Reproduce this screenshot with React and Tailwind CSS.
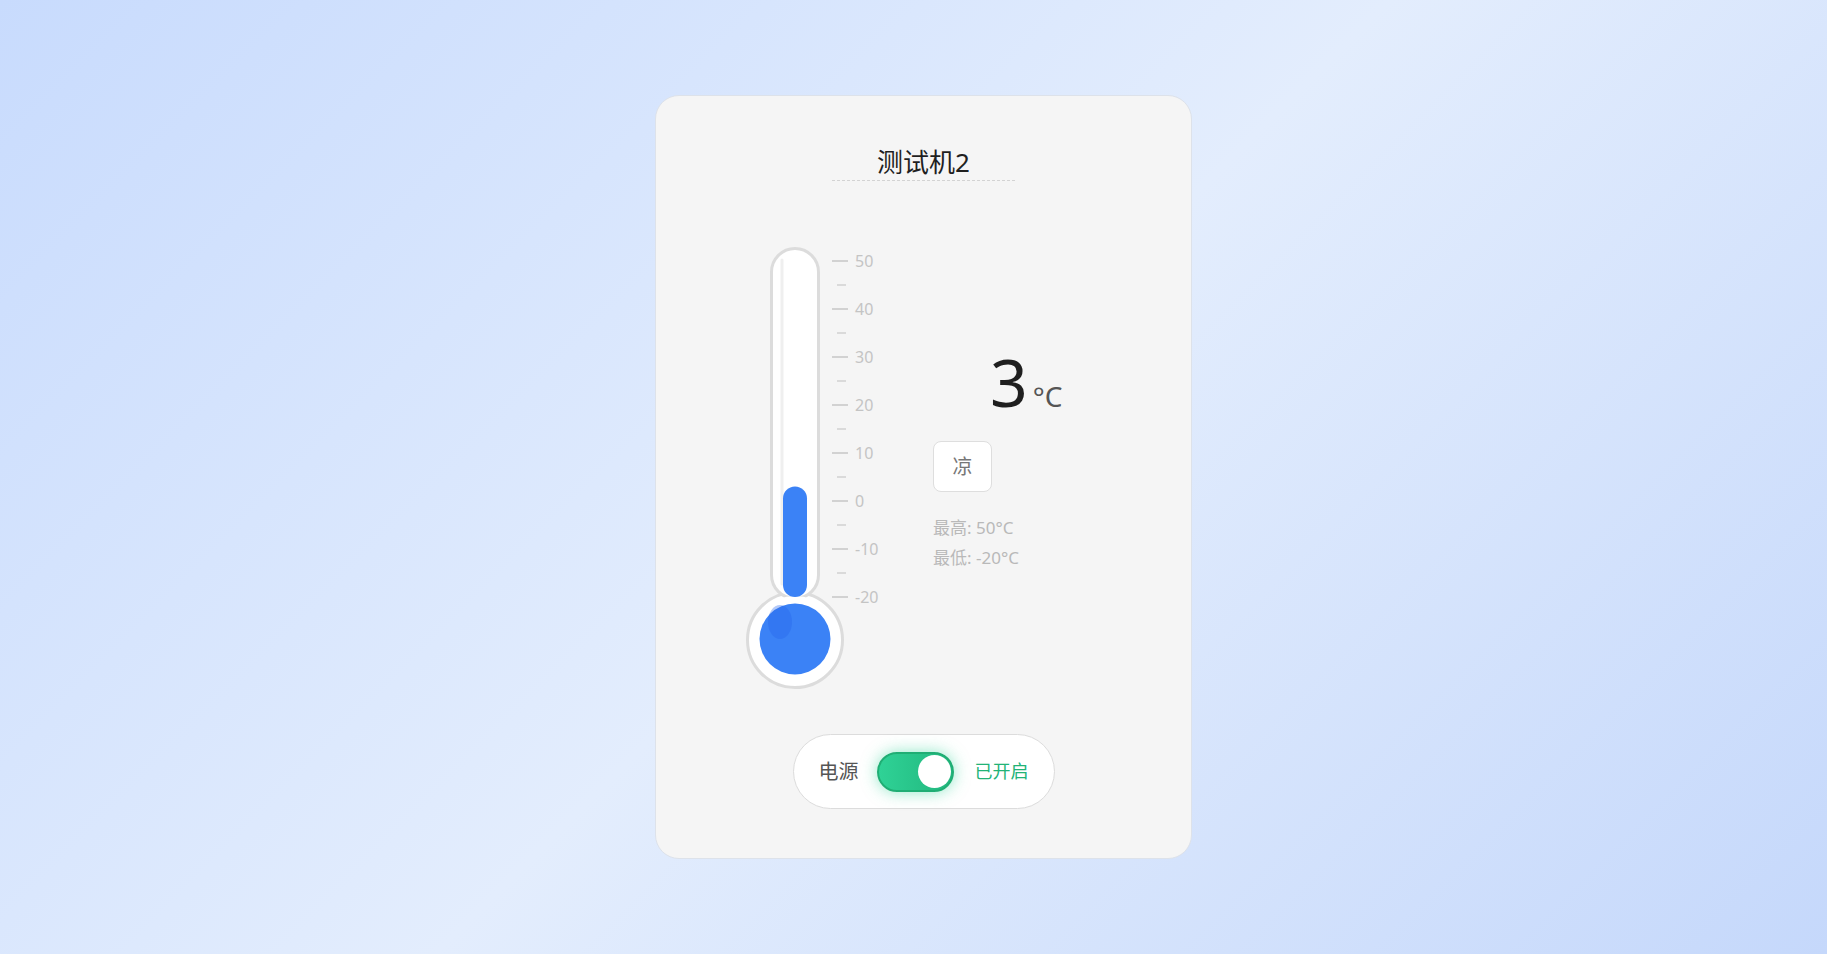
import React from "react";

const ticks = [50, 40, 30, 20, 10, 0, -10, -20];

function Thermometer({ value }) {
  // scale: 50 at y=17, -20 at y=353 (48px per 10 degrees)
  const yFor = (t) => 17 + ((50 - t) / 10) * 48;
  const top = yFor(value);
  return (
    <svg width="145" height="450" viewBox="0 0 145 450">
      <circle cx="51" cy="396" r="47.5" fill="#ffffff" stroke="#dcdcdc" strokeWidth="3" />
      <rect x="27.5" y="4.5" width="47" height="350" rx="23.5" fill="#ffffff" stroke="#dcdcdc" strokeWidth="3" />
      <line x1="38" y1="16" x2="38" y2="340" stroke="#efefef" strokeWidth="3" strokeLinecap="round" />
      <circle cx="51" cy="396" r="44" fill="#ffffff" />
      <rect x="39" y={top} width="24" height={353 - top} rx="12" fill="#3b82f6" />
      <circle cx="51" cy="395" r="35.5" fill="#3b82f6" />
      <ellipse cx="36" cy="378" rx="12" ry="17" fill="#2563eb" opacity="0.35" />
      {ticks.map((t, i) => (
        <g key={t}>
          <line x1="88" y1={17 + i * 48} x2="104" y2={17 + i * 48} stroke="#d2d2d2" strokeWidth="2" />
          <text x="111" y={17 + i * 48} dominantBaseline="central" fontSize="16" fill="#c4c4c4" fontFamily="Noto Sans, sans-serif">
            {t}
          </text>
          {i < ticks.length - 1 && (
            <line x1="93" y1={41 + i * 48} x2="102" y2={41 + i * 48} stroke="#dadada" strokeWidth="2" />
          )}
        </g>
      ))}
    </svg>
  );
}

export default function App() {
  const temp = 3;
  return (
    <div className="min-h-screen w-full flex items-center justify-center pl-[20px] bg-[linear-gradient(135deg,#c8dbfd_0%,#e3edfd_50%,#c5d8fb_100%)] font-['Noto_Sans','Noto_Sans_CJK_SC',sans-serif]">
      <div className="w-[537px] bg-[#f5f5f5] border border-[#dde2ea] rounded-[24px] pt-[48px] pb-[49px] flex flex-col items-center">
        <h1 className="text-[26px] leading-[36px] font-normal text-[#1f1f1f] px-[45px] border-b border-dashed border-[#d3d3d3]">
          测试机2
        </h1>

        <div className="w-full flex mt-[63px] pl-[88px]">
          <Thermometer value={temp} />
          <div className="flex flex-col ml-[44px]">
            <div className="mt-[104px] ml-[57px] flex items-baseline">
              <span className="text-[66px] leading-[66px] text-[#1f1f1f]">{temp}</span>
              <span className="text-[28px] text-[#555] ml-[5px]">°C</span>
            </div>
            <div className="mt-[24px] w-[59px] h-[51px] rounded-[8px] bg-white border border-[#dedede] flex items-center justify-center text-[20px] text-[#777]">
              凉
            </div>
            <div className="mt-[21px] text-[17px] leading-[30px] text-[#b9b9b9]">
              <div>最高: 50°C</div>
              <div>最低: -20°C</div>
            </div>
          </div>
        </div>

        <div className="mt-[40px] h-[75px] px-[25px] rounded-full bg-white border border-[#dcdcdc] flex items-center">
          <span className="text-[20px] text-[#555]">电源</span>
          <button className="ml-[18px] w-[77px] h-[40px] rounded-full bg-[linear-gradient(90deg,#2fd296,#21b67d)] border-2 border-[#1fae74] shadow-[0_0_16px_rgba(52,211,153,0.55)] flex items-center justify-end pr-[1px]">
            <span className="w-[33px] h-[33px] rounded-full bg-white block" />
          </button>
          <span className="ml-[21px] text-[18px] text-[#22b377]">已开启</span>
        </div>
      </div>
    </div>
  );
}
